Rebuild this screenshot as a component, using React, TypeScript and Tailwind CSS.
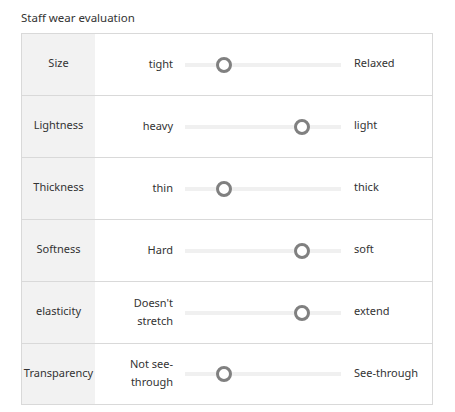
import React from "react";

const rows = [
  { name: "Size", left: "tight", right: "Relaxed", pos: 0.25 },
  { name: "Lightness", left: "heavy", right: "light", pos: 0.75 },
  { name: "Thickness", left: "thin", right: "thick", pos: 0.25 },
  { name: "Softness", left: "Hard", right: "soft", pos: 0.75 },
  { name: "elasticity", left: "Doesn't stretch", right: "extend", pos: 0.75 },
  { name: "Transparency", left: "Not see-through", right: "See-through", pos: 0.25 },
];

export default function App() {
  return (
    <div
      className="w-[455px] h-[412px] bg-white text-[#333] text-[11px]"
      style={{ fontFamily: '"Noto Sans", "Liberation Sans", sans-serif' }}
    >
      <div className="pl-[21px] pt-[10px] h-[33px] text-[11.5px] leading-[16px]">Staff wear evaluation</div>
      <div className="ml-[21px] w-[412px] border border-[#d9d9d9]">
        {rows.map((r, i) => (
          <div
            key={r.name}
            className={`flex ${i > 0 ? "border-t border-[#d9d9d9]" : ""}`}
            style={{ height: i === 0 ? 61 : i === rows.length - 1 ? 61 : 62 }}
          >
            <div className="w-[73px] bg-[#f2f2f2] flex items-center justify-center pb-[2px]">{r.name}</div>
            <div className="w-[78px] flex items-center justify-end text-right leading-[18px] pl-[30px] pb-[2px]">
              {r.left}
            </div>
            <div className="w-[181px] flex items-center pl-[12px] pr-[13px]">
              <div className="relative w-[156px] h-[4px] bg-[#f0f0f0]">
                <div
                  className="absolute top-1/2 w-[16px] h-[16px] -ml-[8px] -mt-[8px] rounded-full border-[3px] border-[#808080] bg-white"
                  style={{ left: `${r.pos * 100}%` }}
                />
              </div>
            </div>
            <div className="flex-1 flex items-center pb-[2px]">{r.right}</div>
          </div>
        ))}
      </div>
    </div>
  );
}
